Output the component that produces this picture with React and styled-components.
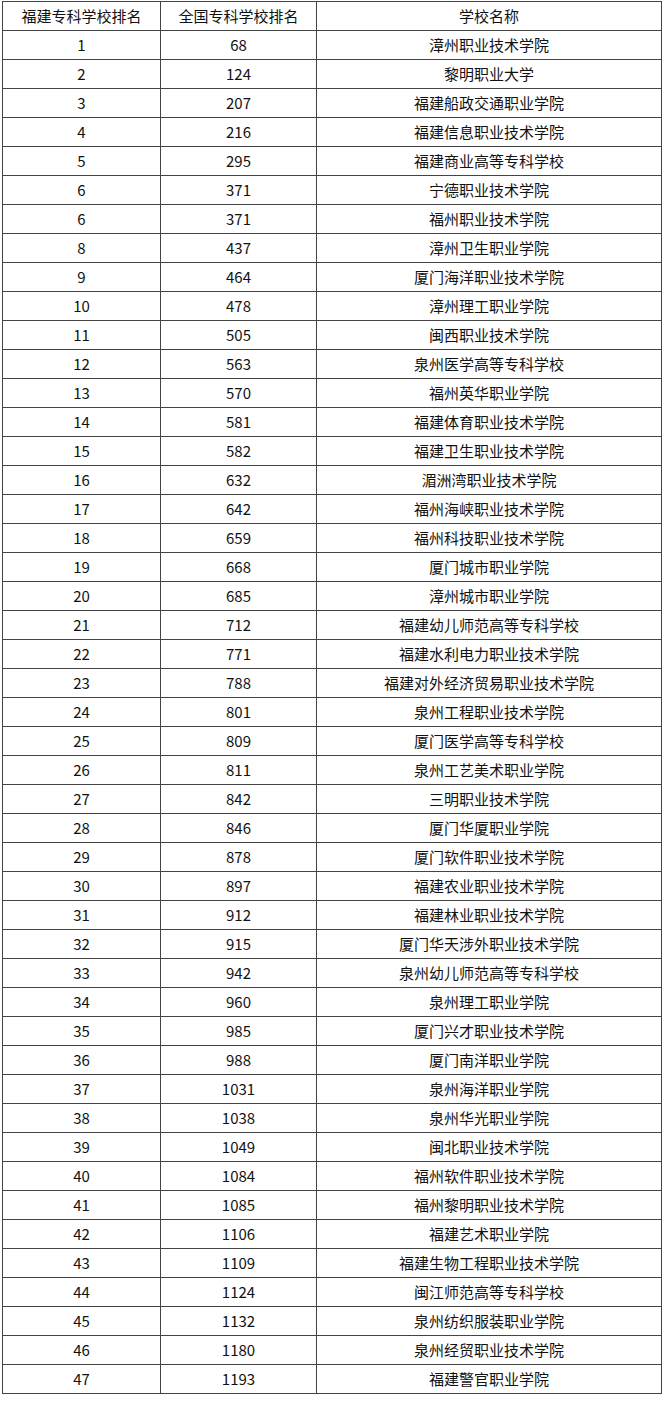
import React from "react";
import styled, { createGlobalStyle } from "styled-components";

const rows = [
  [1, 68, "漳州职业技术学院"],
  [2, 124, "黎明职业大学"],
  [3, 207, "福建船政交通职业学院"],
  [4, 216, "福建信息职业技术学院"],
  [5, 295, "福建商业高等专科学校"],
  [6, 371, "宁德职业技术学院"],
  [6, 371, "福州职业技术学院"],
  [8, 437, "漳州卫生职业学院"],
  [9, 464, "厦门海洋职业技术学院"],
  [10, 478, "漳州理工职业学院"],
  [11, 505, "闽西职业技术学院"],
  [12, 563, "泉州医学高等专科学校"],
  [13, 570, "福州英华职业学院"],
  [14, 581, "福建体育职业技术学院"],
  [15, 582, "福建卫生职业技术学院"],
  [16, 632, "湄洲湾职业技术学院"],
  [17, 642, "福州海峡职业技术学院"],
  [18, 659, "福州科技职业技术学院"],
  [19, 668, "厦门城市职业学院"],
  [20, 685, "漳州城市职业学院"],
  [21, 712, "福建幼儿师范高等专科学校"],
  [22, 771, "福建水利电力职业技术学院"],
  [23, 788, "福建对外经济贸易职业技术学院"],
  [24, 801, "泉州工程职业技术学院"],
  [25, 809, "厦门医学高等专科学校"],
  [26, 811, "泉州工艺美术职业学院"],
  [27, 842, "三明职业技术学院"],
  [28, 846, "厦门华厦职业学院"],
  [29, 878, "厦门软件职业技术学院"],
  [30, 897, "福建农业职业技术学院"],
  [31, 912, "福建林业职业技术学院"],
  [32, 915, "厦门华天涉外职业技术学院"],
  [33, 942, "泉州幼儿师范高等专科学校"],
  [34, 960, "泉州理工职业学院"],
  [35, 985, "厦门兴才职业技术学院"],
  [36, 988, "厦门南洋职业学院"],
  [37, 1031, "泉州海洋职业学院"],
  [38, 1038, "泉州华光职业学院"],
  [39, 1049, "闽北职业技术学院"],
  [40, 1084, "福州软件职业技术学院"],
  [41, 1085, "福州黎明职业技术学院"],
  [42, 1106, "福建艺术职业学院"],
  [43, 1109, "福建生物工程职业技术学院"],
  [44, 1124, "闽江师范高等专科学校"],
  [45, 1132, "泉州纺织服装职业学院"],
  [46, 1180, "泉州经贸职业技术学院"],
  [47, 1193, "福建警官职业学院"],
];

const GlobalStyle = createGlobalStyle`
  html, body {
    margin: 0;
    padding: 0;
    background: #fff;
  }
`;

const Page = styled.div`
  padding: 1px 0 0 2px;
`;

const Table = styled.table`
  border-collapse: collapse;
  width: 659px;
  table-layout: fixed;
  font-family: "Noto Sans CJK SC", "Liberation Sans", sans-serif;
  font-size: 15px;
  color: #111;
`;

const Cell = styled.td`
  border: 1px solid #444;
  height: 28px;
  padding: 0;
  text-align: center;
  vertical-align: middle;
  line-height: 28px;
  white-space: nowrap;
`;

export default function App() {
  return (
    <Page>
      <GlobalStyle />
      <Table>
        <colgroup>
          <col style={{ width: 158 }} />
          <col style={{ width: 156 }} />
          <col style={{ width: 345 }} />
        </colgroup>
        <tbody>
          <tr>
            <Cell>福建专科学校排名</Cell>
            <Cell>全国专科学校排名</Cell>
            <Cell>学校名称</Cell>
          </tr>
          {rows.map((row, i) => (
            <tr key={i}>
              <Cell>{row[0]}</Cell>
              <Cell>{row[1]}</Cell>
              <Cell>{row[2]}</Cell>
            </tr>
          ))}
        </tbody>
      </Table>
    </Page>
  );
}
